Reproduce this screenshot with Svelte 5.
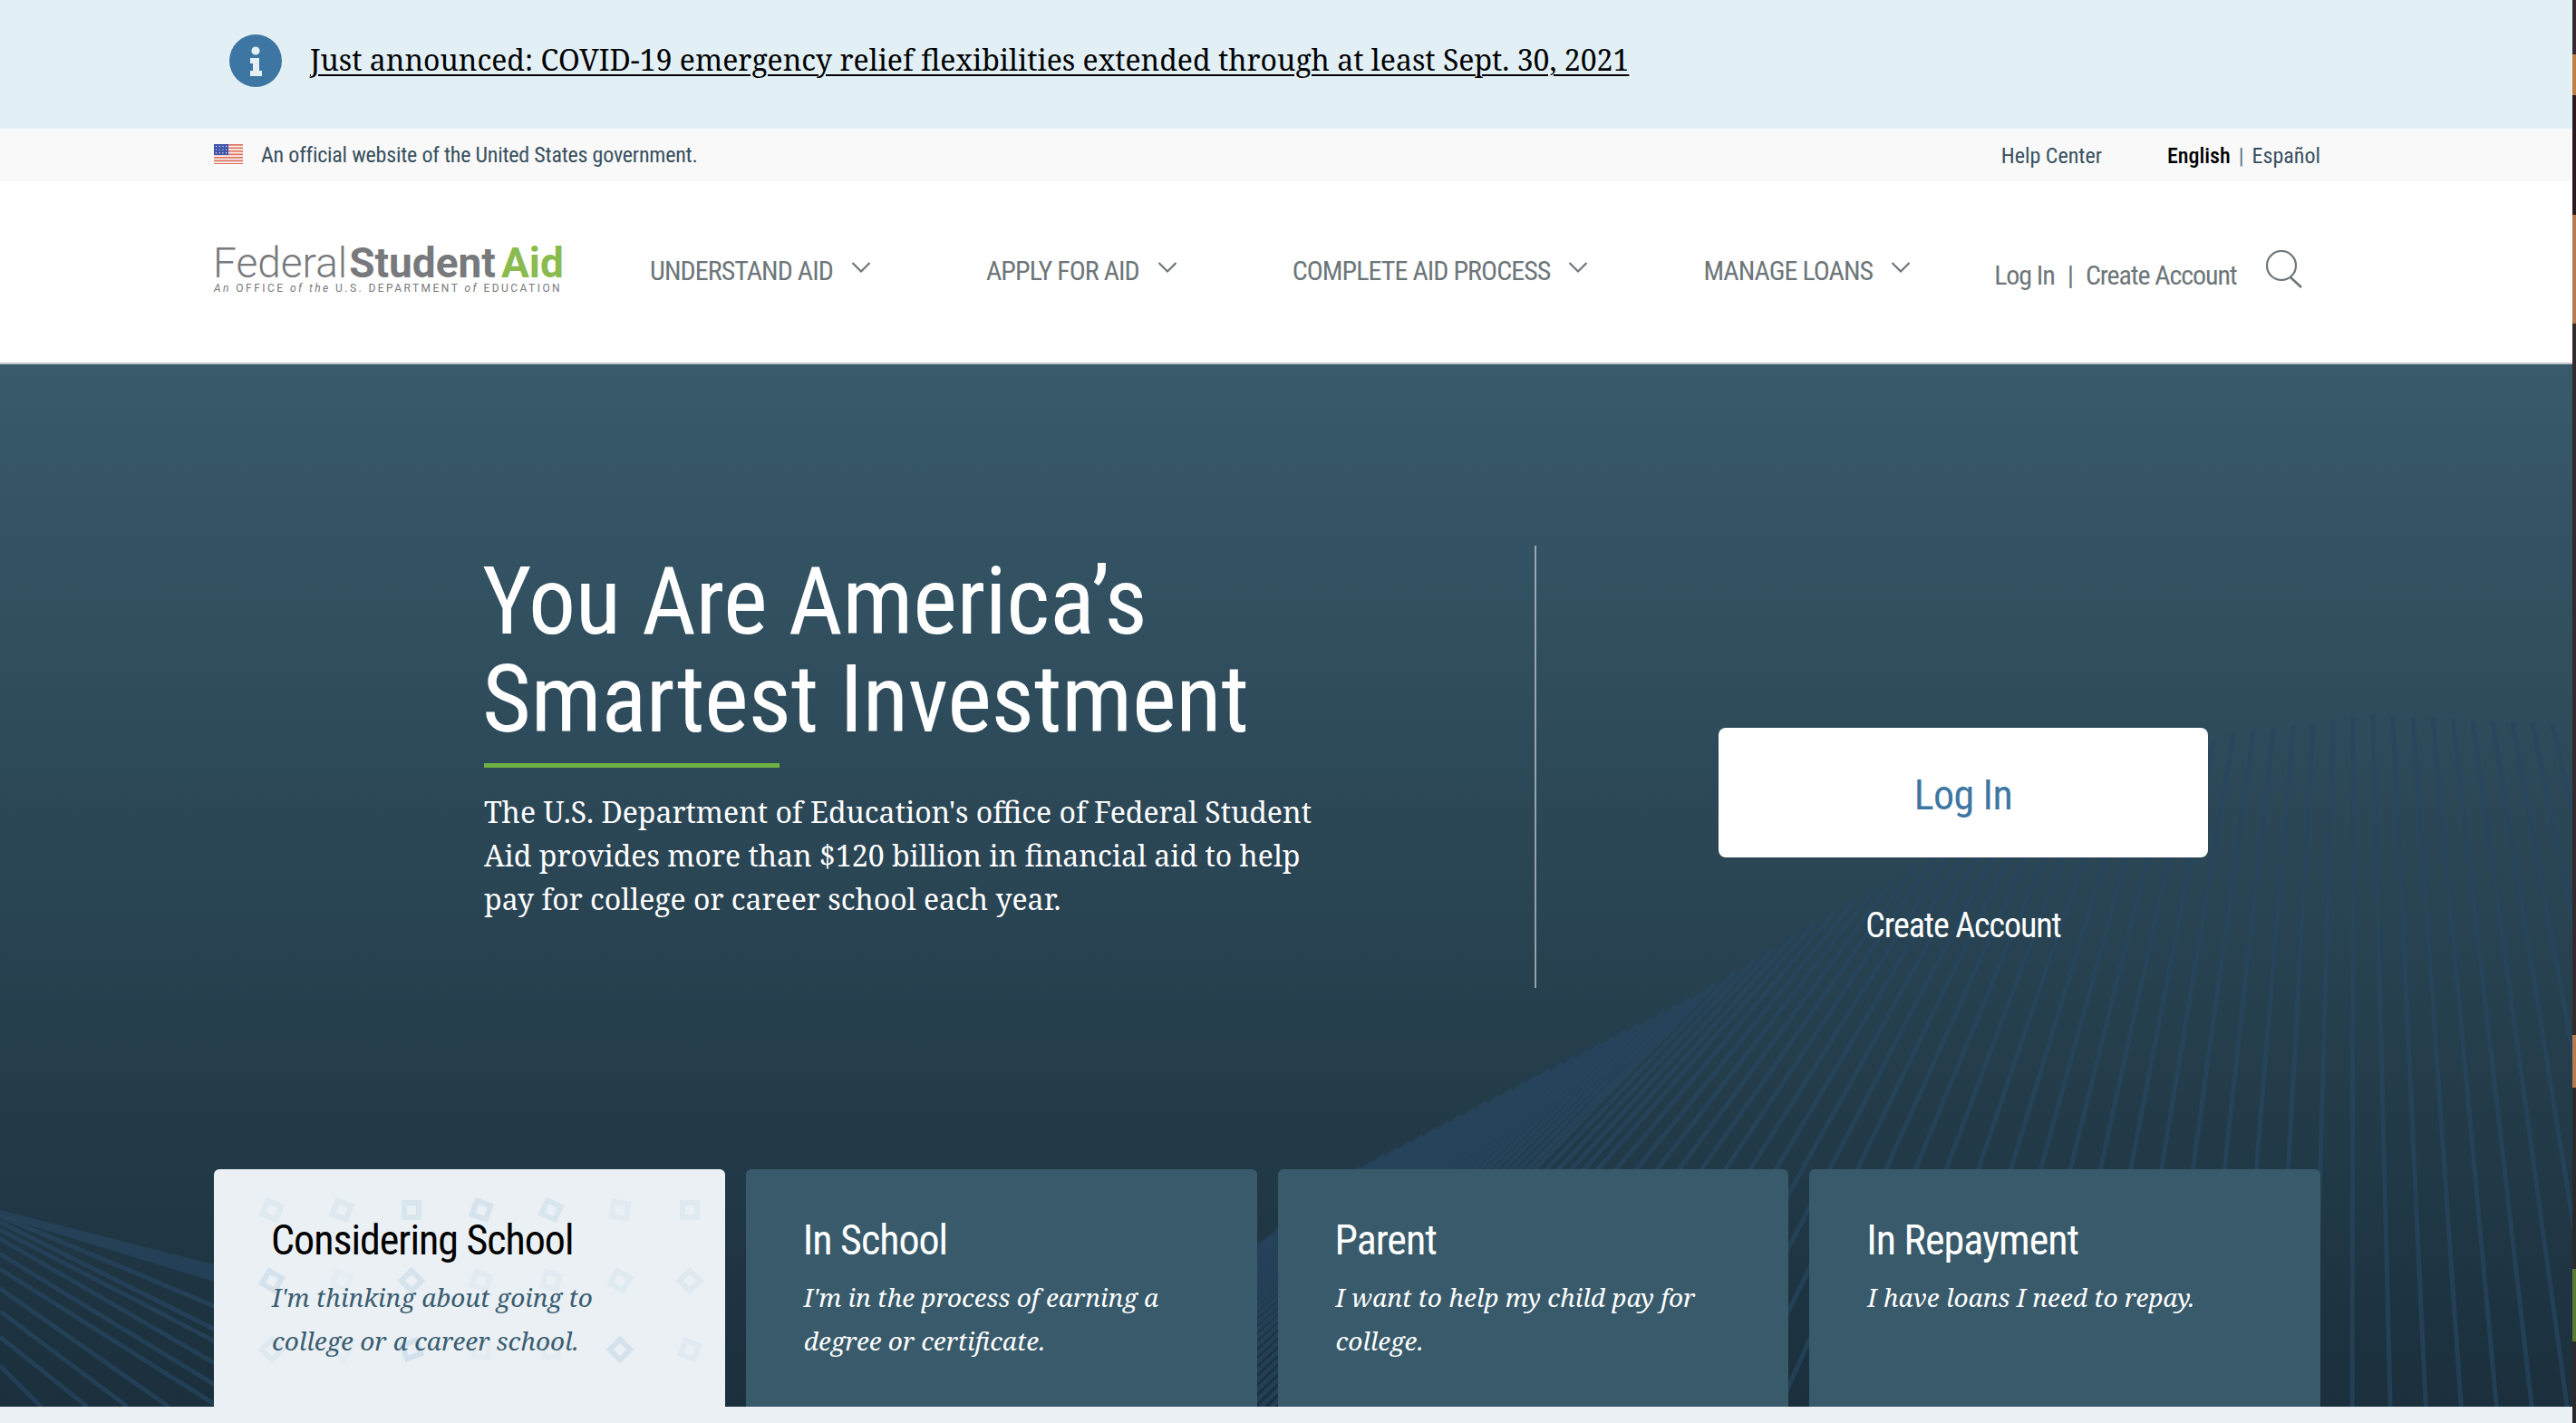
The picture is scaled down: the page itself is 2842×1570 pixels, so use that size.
<script>
  const nav = ['UNDERSTAND AID', 'APPLY FOR AID', 'COMPLETE AID PROCESS', 'MANAGE LOANS'];
  const cards = [
    { title: 'Considering School', text: "I'm thinking about going to college or a career school.", active: true },
    { title: 'In School', text: "I'm in the process of earning a degree or certificate." },
    { title: 'Parent', text: 'I want to help my child pay for college.' },
    { title: 'In Repayment', text: 'I have loans I need to repay.' }
  ];
  function lerp(pts, x) {
    for (let i = 0; i < pts.length - 1; i++) {
      const [a, b] = pts[i], [c, d] = pts[i + 1];
      if (x <= c) return b + ((x - a) / (c - a)) * (d - b);
    }
    return pts[pts.length - 1][1];
  }
  const ridge = [[1500,1289],[1700,1185],[1877,1095],[2005,1017],[2125,949],[2300,860],[2467,810],[2613,789],[2838,800]];
  const slope = [[1500,-1.3],[2005,-.88],[2356,-.3],[2613,.02],[2838,.25]];
  const right = [];
  for (let x = 1500; x < 2838; x += x < 1880 ? 14 : 22) {
    const y = lerp(ridge, x) - 402;
    const s = lerp(slope, x);
    right.push(`M${x} ${y}L${x + s * (1150 - y)} 1150`);
  }
  const leftRows = [[470,.52],[500,.58],[550,.61],[600,.63],[665,.7],[740,.75],[825,.8],[920,1],[445,.5],[425,.42]];
  const left = leftRows.map(([v, s]) => {
    const y = 1200 + v / 3 - 402;
    return `M0 ${y}L${(1150 - y) / s} 1150`;
  });
  const cols = [300,377,454,531,608,684,761].map(x => x - 236);
  const rows = [[20,20,0,20,25,8,0],[30,20,45,20,15,30,45],[45,30,-20,0,0,45,20]];
  const ops = [[.45,.5,.6,.75,.7,.35,.45],[.8,.2,.75,.3,.3,.45,.45],[.45,.2,.9,.25,.25,.8,.35]];
  const rowY = [45,123,199];
  const marks = [];
  rows.forEach((r, i) => r.forEach((a, j) => marks.push({ x: cols[j], y: rowY[i], a, o: ops[i][j] })));
  const stripes = [0,1,2,3,4,5,6].map(i => i * 3.5);
  const stars = [];
  for (let r = 0; r < 3; r++) for (let c = 0; c < 4; c++) stars.push([2.5 + c * 3.7, 2.5 + r * 3.6]);
</script>

<div class="shell">
  <div class="page">
    <div class="banner">
      <svg class="info" viewBox="0 0 58 58" aria-hidden="true">
        <circle cx="29" cy="29" r="29" fill="#3d76a3" />
        <circle cx="29" cy="18" r="4.6" fill="#e2f0f6" />
        <path d="M23 26h10v14h3v6H23v-6h3v-8h-3z" fill="#e2f0f6" />
      </svg>
      <a class="banner-link" href="#top">Just announced: COVID-19 emergency relief flexibilities extended through at least Sept. 30, 2021</a>
    </div>

    <div class="gov">
      <svg class="flag" viewBox="0 0 32 22" aria-hidden="true">
        <rect width="32" height="22" fill="#f6f1ef" />
        {#each stripes as y}<rect {y} width="32" height="1.7" fill="#e0735f" />{/each}
        <rect width="16" height="12" fill="#3f55a8" />
        {#each stars as s}<circle cx={s[0]} cy={s[1]} r=".7" fill="#e6e9f5" />{/each}
      </svg>
      <span class="official">An official website of the United States government.</span>
      <span class="help">Help Center</span>
      <span class="lang"><b>English</b><i>|</i>Español</span>
    </div>

    <header class="nav">
      <div class="logo">
        <div class="logo-main"><span class="fed">Federal</span><span class="stu">Student</span><span class="aid">Aid</span></div>
        <div class="tag"><em>An</em> OFFICE <em>of the</em> U.S. DEPARTMENT <em>of</em> EDUCATION</div>
      </div>
      <nav class="menu">
        {#each nav as item}
          <span class="menu-item">{item}
            <svg viewBox="0 0 22 14" aria-hidden="true"><path d="M1.5 2 11 11.5 20.5 2" fill="none" stroke="#6d7679" stroke-width="2.2" /></svg>
          </span>
        {/each}
      </nav>
      <div class="auth">Log In<i>|</i>Create Account</div>
      <svg class="search" viewBox="0 0 40 42" aria-hidden="true">
        <circle cx="17" cy="17" r="16" fill="none" stroke="#6d7679" stroke-width="2.2" />
        <path d="M27 30 39 41" fill="none" stroke="#6d7679" stroke-width="2.6" />
      </svg>
    </header>

    <section class="hero">
      <svg class="lines" viewBox="0 0 2838 1150" aria-hidden="true">
        {#each right as d}<path {d} />{/each}
        {#each left as d}<path {d} />{/each}
        <polygon points="0,933 236,993 236,1012 0,940" />
      </svg>
      <div class="hero-main">
        <div class="intro">
          <h1>You Are America’s<br />Smartest Investment</h1>
          <div class="rule"></div>
          <p>The U.S. Department of Education's office of Federal Student Aid provides more than $120 billion in financial aid to help pay for college or career school each year.</p>
        </div>
        <div class="divider"></div>
        <div class="cta">
          <button class="login">Log In</button>
          <span class="create">Create Account</span>
        </div>
      </div>
      <div class="cards">
        {#each cards as c}
          <article class="card" class:active={c.active}>
            {#if c.active}
              <div class="marks">
                {#each marks as m}
                  <span class="mark" style="left:{m.x}px;top:{m.y}px;transform:translate(-50%,-50%) rotate({m.a}deg);opacity:{m.o}"></span>
                {/each}
              </div>
            {/if}
            <h2>{c.title}</h2>
            <p>{c.text}</p>
          </article>
        {/each}
      </div>
    </section>
    <div class="foot"></div>
  </div>
  <div class="strip"></div>
</div>

<style>
  :global(body) { margin: 0; background: #fff; }
  .shell { display: flex; width: 2842px; height: 1570px; overflow: hidden; font-stretch: 75%; }
  .page { width: 2838px; flex: none; display: flex; flex-direction: column; }
  .strip {
    width: 4px;
    background: linear-gradient(180deg, #35282f 0 60px, #c07f45 60px 105px, #2c1a20 105px 237px, #b87b4d 237px 357px, #322a2d 357px 1142px, #b87b4d 1142px 1200px, #2a2a2d 1200px 1400px, #5a7a30 1400px 1480px, #2a2a2d 1480px);
  }
  .banner {
    height: 142px; background: #e2f0f6; display: flex; align-items: center;
    padding: 0 0 10px 253px; box-sizing: border-box; gap: 31px;
  }
  .info { width: 58px; height: 58px; flex: none; margin-top: 2px; }
  .banner-link {
    font: 32px/1.2 "Noto Serif", serif;
    color: #000; text-decoration: underline; text-underline-offset: 4px; text-decoration-thickness: 2px;
  }
  .gov {
    height: 58px; background: #f9f9f9; display: flex; align-items: center;
    padding: 0 278px 0 236px; box-sizing: border-box;
    font-family: Roboto, sans-serif; font-stretch: 75%;
    font-size: 24px; color: #38505e;
  }
  .flag { width: 32px; height: 22px; margin-right: 20px; margin-top: -2px; }
  .official { flex: 1; letter-spacing: -.22px; }
  .help { margin: 2px 72px 0 0; }
  .lang { margin-top: 2px; }
  .lang b { color: #000; font-weight: 500; }
  .lang i { font-style: normal; margin: 0 9px; color: #587080; }
  .nav {
    height: 202px; background: #fff; border-bottom: 2px solid #c3c8cb; box-sizing: border-box;
    display: flex; align-items: center; padding: 0 0 6px 236px; color: #6d7679;
    font-family: Roboto, sans-serif; font-stretch: 75%;
  }
  .logo { width: 383px; flex: none; font-stretch: 100%; color: #77797c; margin: 0 98px 3px 0; }
  .logo-main { font-size: 46px; line-height: 45px; display: flex; white-space: nowrap; margin-left: -1px; }
  .fed { font-weight: 300; font-stretch: 92%; margin-right: 2px; }
  .stu { font-weight: 700; font-stretch: 94%; margin-right: 6px; }
  .aid { font-weight: 700; font-stretch: 94%; color: #8abb4f; }
  .tag { font-size: 12px; line-height: 10px; letter-spacing: 2.45px; white-space: nowrap; }
  .menu { display: flex; gap: 127px; font-size: 30px; letter-spacing: -.95px; margin-top: 2px; }
  .menu-item { display: flex; align-items: center; gap: 20px; white-space: nowrap; }
  .menu-item svg { width: 22px; height: 14px; margin-top: -6px; }
  .auth { margin-left: 92px; font-size: 30px; letter-spacing: -1.1px; margin-top: 12px; white-space: nowrap; }
  .auth i { font-style: normal; margin: 0 14px; }
  .search { width: 40px; height: 42px; margin-left: 32px; }
  .hero {
    position: relative; height: 1150px; flex: none; display: flex; flex-direction: column; justify-content: space-between;
    background: linear-gradient(180deg, #385a6b 0%, #1b2f3c 100%);
  }
  .lines { position: absolute; inset: 0; width: 100%; height: 100%; }
  .lines path { stroke: rgba(38, 70, 96, .7); stroke-width: 5; fill: none; }
  .lines polygon { fill: rgba(38, 70, 96, .7); }
  .hero-main { position: relative; display: flex; margin-top: 200px; height: 488px; }
  .intro { width: 1693px; padding-left: 534px; box-sizing: border-box; flex: none; color: #fff; }
  h1 {
    margin: 8px 0 0 -2px; font: 430 104px/108px Roboto, sans-serif; font-stretch: 75%; letter-spacing: -.4px;
    white-space: nowrap;
  }
  .rule { width: 326px; height: 5px; background: #6fb043; margin-top: 16px; }
  .intro p { margin: 25px 0 0; font: 32px/48px "Noto Serif", serif; width: 930px; }
  .divider { width: 2px; background: rgba(255, 255, 255, .5); flex: none; }
  .cta { flex: none; margin-left: 201px; width: 540px; display: flex; flex-direction: column; align-items: center; padding-top: 201px; }
  .login {
    width: 540px; height: 143px; border: 0; border-radius: 8px; background: #fff; color: #3d76a3;
    font: 430 46px Roboto, sans-serif; font-stretch: 75%; letter-spacing: -.6px; padding: 5px 0 0;
  }
  .create { color: #fff; margin-top: 52px; font: 430 38px/46px Roboto, sans-serif; font-stretch: 75%; letter-spacing: -1.1px; }
  .cards {
    position: relative; display: grid; grid-template-columns: repeat(4, 1fr); gap: 23px;
    margin: 0 278px 0 236px; height: 262px;
  }
  .card {
    position: relative; background: #385a6b; color: #fff; border-radius: 6px 6px 0 0; padding: 50px 64px 0; box-sizing: border-box; overflow: hidden;
  }
  .card h2 { position: relative; margin: 0 0 0 -1px; font: 430 46px/56px Roboto, sans-serif; font-stretch: 75%; letter-spacing: -1px; }
  .card p { position: relative; margin: 11px 0 0; font: italic 28px/48px "Noto Serif", serif; }
  .card.active { background: #ebf0f5; }
  .card.active h2 { color: #000; }
  .card.active p { color: #3a5d70; }
  .marks { position: absolute; inset: 0; }
  .mark { position: absolute; width: 10px; height: 10px; border: 6px solid #cfdfea; }
  .foot { height: 18px; background: #ebf0f5; flex: none; }
</style>
